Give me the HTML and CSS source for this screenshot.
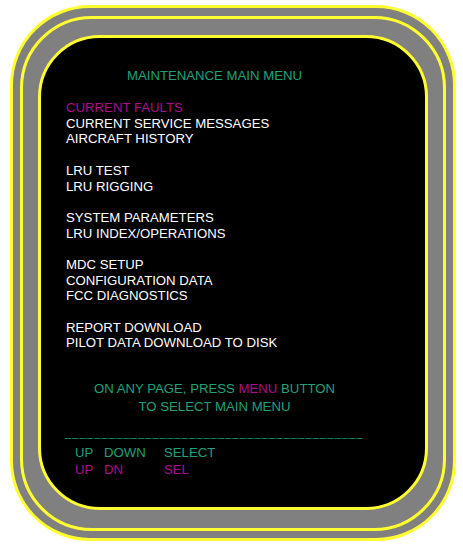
FILE: index.html
```html
<!DOCTYPE html>
<html>
<head>
<meta charset="utf-8">
<link rel="stylesheet" href="styles.css">
</head>
<body>
<div class="bezel">
  <div class="bezel-inner">
    <div class="screen">
      <div class="content">
        <div class="title">MAINTENANCE MAIN MENU</div>
        <div class="menu">
          <div class="group">
            <div class="item active">CURRENT FAULTS</div>
            <div class="item">CURRENT SERVICE MESSAGES</div>
            <div class="item">AIRCRAFT HISTORY</div>
          </div>
          <div class="group">
            <div class="item">LRU TEST</div>
            <div class="item">LRU RIGGING</div>
          </div>
          <div class="group">
            <div class="item">SYSTEM PARAMETERS</div>
            <div class="item">LRU INDEX/OPERATIONS</div>
          </div>
          <div class="group">
            <div class="item">MDC SETUP</div>
            <div class="item">CONFIGURATION DATA</div>
            <div class="item">FCC DIAGNOSTICS</div>
          </div>
          <div class="group">
            <div class="item">REPORT DOWNLOAD</div>
            <div class="item">PILOT DATA DOWNLOAD TO DISK</div>
          </div>
        </div>
        <div class="note">
          <div>ON ANY PAGE, PRESS <span class="mag">MENU</span> BUTTON</div>
          <div>TO SELECT MAIN MENU</div>
        </div>
        <div class="rule">_________________________________________</div>
        <div class="keys">
          <span>UP</span><span>DOWN</span><span>SELECT</span>
          <span class="mag">UP</span><span class="mag">DN</span><span class="mag">SEL</span>
        </div>
      </div>
    </div>
  </div>
</div>
</body>
</html>
```
FILE: styles.css
```css
html, body {
  margin: 0;
  padding: 0;
  background: #ffffff;
}
body {
  font-family: "Liberation Sans", Arial, sans-serif;
  font-size: 13.2px;
}
.bezel {
  box-sizing: border-box;
  margin: 5px 0 0 10px;
  width: 446px;
  height: 536px;
  border: 3px solid #ffff30;
  border-radius: 80px;
  background: #808080;
  padding: 8px 7px 7px 7px;
  display: flex;
}
.bezel-inner {
  box-sizing: border-box;
  flex: 1;
  border: 3px solid #ffff30;
  border-radius: 72px;
  background: #808080;
  padding: 16px 15px 18px 15px;
  display: flex;
}
.screen {
  box-sizing: border-box;
  flex: 1;
  border: 3px solid #ffff30;
  border-radius: 62px;
  background: #000000;
  padding: 30px 0 0 25px;
}
.content {
  width: 297px;
}
.title {
  color: #1fa27a;
  text-align: center;
  line-height: 16px;
}
.menu {
  margin-top: 16px;
  color: #ffffff;
  line-height: 15.7px;
}
.group + .group {
  margin-top: 15.7px;
}
.item.active {
  color: #a8108c;
}
.mag {
  color: #a8108c;
}
.note {
  margin-top: 29px;
  color: #1fa27a;
  text-align: center;
  line-height: 18px;
}
.rule {
  margin-top: 9px;
  color: #1fa27a;
  font-size: 11px;
  letter-spacing: 1.17px;
  line-height: 17px;
  height: 17px;
  white-space: nowrap;
  margin-left: -1px;
}
.keys {
  margin-top: 2px;
  padding-left: 9px;
  display: grid;
  grid-template-columns: 29px 60px auto;
  line-height: 17px;
  color: #1fa27a;
}
```
